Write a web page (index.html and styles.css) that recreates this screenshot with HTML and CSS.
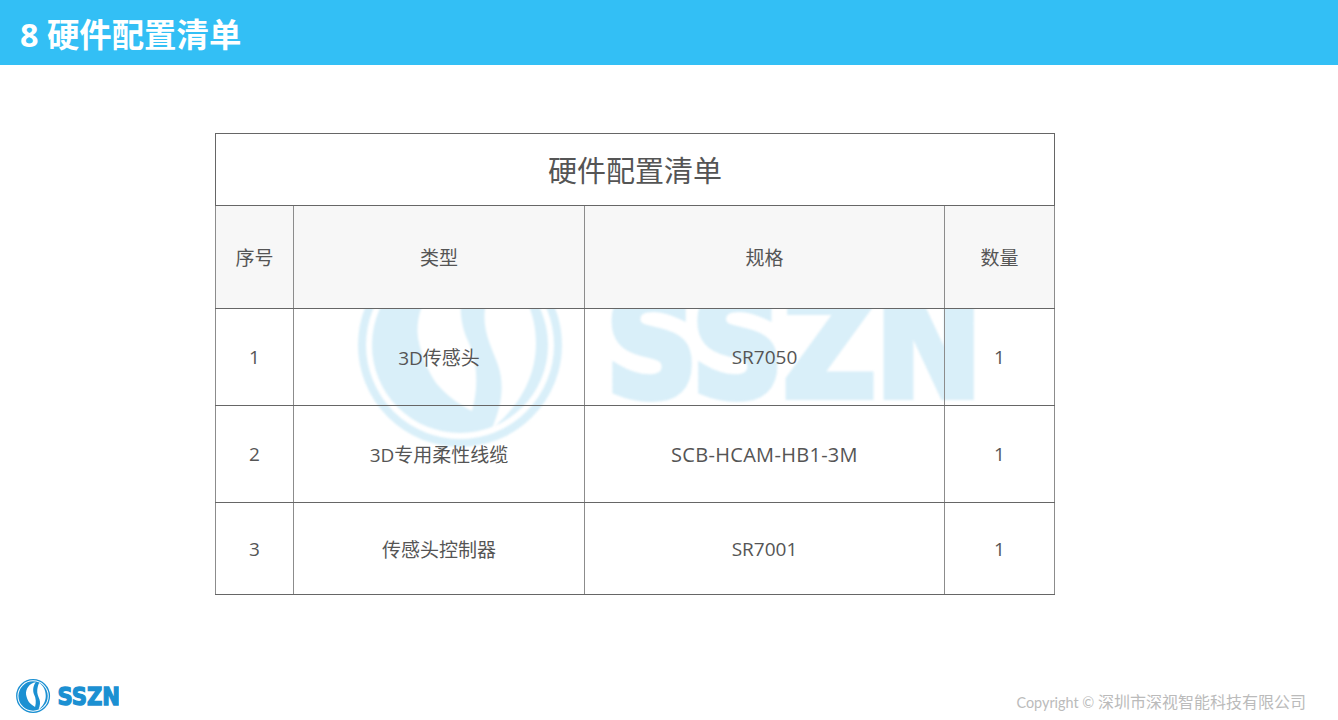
FILE: index.html
```html
<!DOCTYPE html>
<html lang="zh-CN">
<head>
<meta charset="utf-8">
<title>硬件配置清单</title>
<link rel="stylesheet" href="styles.css">
</head>
<body>
<svg class="defs" width="0" height="0" aria-hidden="true">
  <symbol id="logo" viewBox="0 0 617 204">
    <circle cx="102" cy="102" r="98" fill="none" stroke="currentColor" stroke-width="8"/>
    <circle cx="102" cy="102" r="88" fill="currentColor"/>
    <path fill="#fff" d="M118 20C80 26 56 60 60 95C64 115 70 128 78 140C90 154 102 162 114 168C122 140 118 115 110 98C102 80 96 50 118 20Z"/>
    <path fill="#fff" d="M138 24C160 36 178 64 178 100C178 135 160 165 134 185C145 160 146 140 140 122C134 105 124 88 127 66C129 50 132 36 138 24Z"/>
    <text class="logo-text" x="248" y="153" textLength="376" lengthAdjust="spacingAndGlyphs">SSZN</text>
  </symbol>
</svg>
<header class="title-bar"><h1 class="title">8 硬件配置清单</h1></header>
<main class="content">
  <svg class="watermark"><use href="#logo"/></svg>
  <table class="spec">
    <colgroup><col class="c1"><col class="c2"><col class="c3"><col class="c4"></colgroup>
    <thead>
      <tr class="r-cap"><th colspan="4" class="cap">硬件配置清单</th></tr>
      <tr class="r-head"><th>序号</th><th>类型</th><th>规格</th><th>数量</th></tr>
    </thead>
    <tbody>
      <tr class="r-a"><td>1</td><td>3D传感头</td><td>SR7050</td><td>1</td></tr>
      <tr class="r-a"><td>2</td><td>3D专用柔性线缆</td><td class="wide">SCB-HCAM-HB1-3M</td><td>1</td></tr>
      <tr class="r-b"><td>3</td><td>传感头控制器</td><td>SR7001</td><td>1</td></tr>
    </tbody>
  </table>
</main>
<footer class="footer">
  <svg class="foot-logo"><use href="#logo"/></svg>
  <span class="copy">Copyright © <span class="copy-cn">深圳市深视智能科技有限公司</span></span>
</footer>
</body>
</html>
```
FILE: styles.css
```css
* { box-sizing: border-box; }
html, body { margin: 0; padding: 0; }
body {
  width: 1338px;
  height: 720px;
  overflow: hidden;
  display: flex;
  flex-direction: column;
  background: #fff;
  font-family: "Open Sans", "Noto Sans CJK SC", sans-serif;
  color: #555;
}
.defs { position: absolute; }
.logo-text {
  font-family: "DejaVu Sans", sans-serif;
  font-weight: 700;
  font-size: 145px;
  fill: currentColor;
  stroke: currentColor;
  stroke-width: 8px;
}
.title-bar {
  height: 65px;
  flex: none;
  background: #33bff5;
  padding-left: 20px;
  display: flex;
  align-items: center;
}
.title {
  margin: 0;
  color: #fff;
  font-size: 32.4px;
  font-weight: 700;
  line-height: 1;
  position: relative;
  top: 2px;
  white-space: pre;
}
.content {
  flex: 1;
  position: relative;
  padding: 68px 0 0 215px;
}
.watermark {
  position: absolute;
  left: 358px;
  top: 178px;
  width: 617px;
  height: 204px;
  color: #d9eff9;
  filter: blur(0.8px);
}
.spec {
  position: relative;
  width: 839px;
  height: 461px;
  border-collapse: collapse;
  table-layout: fixed;
  font-size: 19px;
}
.c1 { width: 78px; }
.c2 { width: 291px; }
.c3 { width: 360px; }
.c4 { width: 110px; }
.spec th, .spec td {
  border: 1px solid #666;
  padding: 0;
  text-align: center;
  vertical-align: middle;
  font-weight: 400;
}
.spec td, .r-head th { border-left-color: #8c8c8c; border-right-color: #8c8c8c; }
.spec .wide { font-size: 20px; letter-spacing: 0.3px; }
.r-cap { height: 72px; }
.r-cap th { background: #fff; font-size: 29px; padding-bottom: 2px; }
.r-head { height: 103px; }
.r-head th { background: #f7f7f7; }
.r-a { height: 97px; }
.r-b { height: 92px; }
.footer {
  height: 55px;
  flex: none;
  display: flex;
  justify-content: space-between;
  align-items: flex-start;
  padding: 14px 32px 0 16px;
}
.foot-logo {
  width: 103px;
  height: 34px;
  color: #1b90d2;
}
.copy {
  margin-top: 13px;
  font-size: 14.4px;
  line-height: 20px;
  color: #bbb;
  font-family: "Lato", "Noto Sans CJK SC", sans-serif;
}
.copy-cn { font-size: 16px; }
```
